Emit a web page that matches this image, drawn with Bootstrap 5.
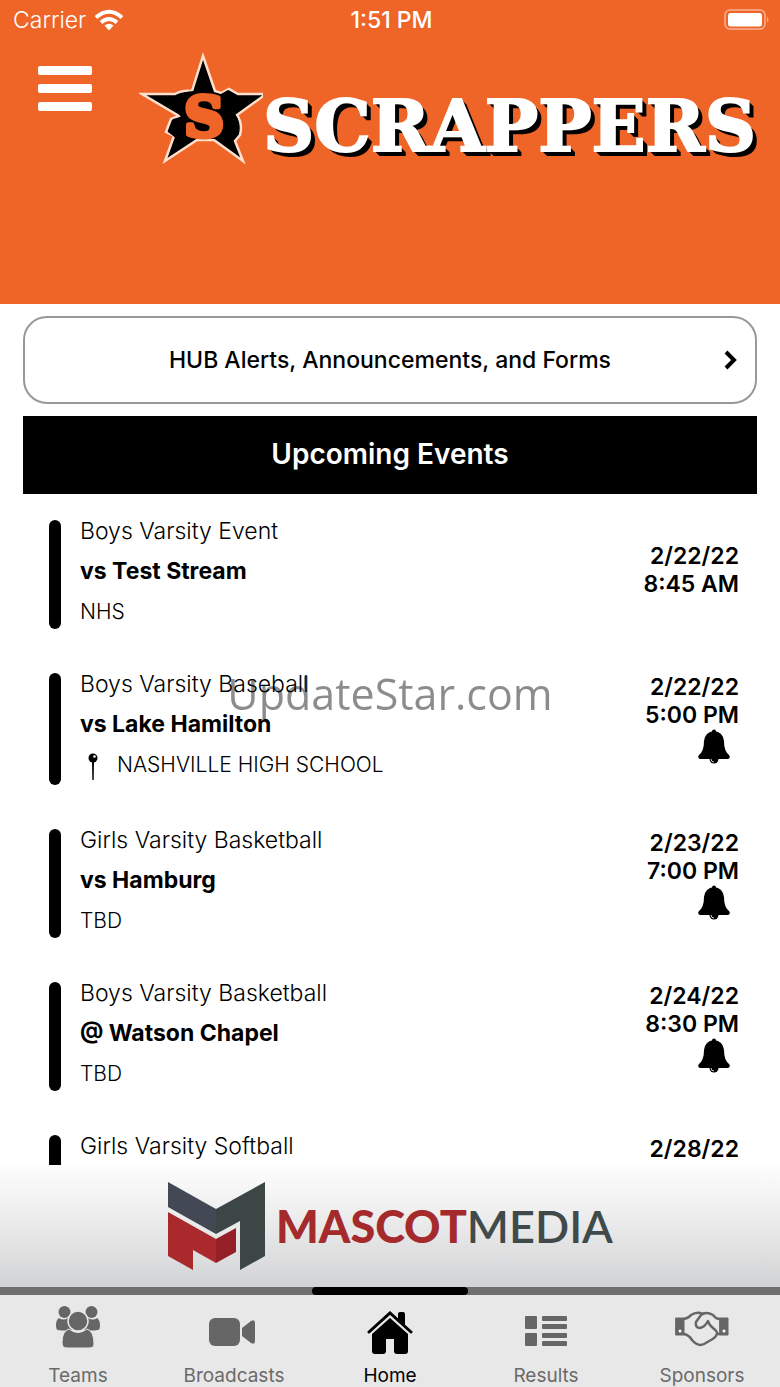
<!DOCTYPE html>
<html lang="en">
<head>
<meta charset="utf-8">
<meta name="viewport" content="width=device-width, initial-scale=1">
<title>Scrappers</title>
<link href="https://cdn.jsdelivr.net/npm/bootstrap@5.3.0/dist/css/bootstrap.min.css" rel="stylesheet">
<script src="https://cdn.jsdelivr.net/npm/bootstrap@5.3.0/dist/js/bootstrap.bundle.min.js"></script>
<style>
  body { font-family: Inter, "Liberation Sans", sans-serif; color: #000; background: #fff; }
  svg { display: block; flex: none; }
  .app-header { background: #ef6427; min-height: 304px; }
  .status-bar { height: 40px; padding: 0 10px 0 13px; font-size: 23px; line-height: 40px; }
  .carrier { font-weight: 300; }
  .clock { font-weight: 500; }
  .brand-row { padding: 12px 24px 0 38px; }
  .menu-btn { margin-top: 14px; }
  .wordmark { font: bold 71px/80px "DejaVu Serif", serif; color: #fff; margin-top: 34px;
    -webkit-text-stroke: 2px #fff;
    text-shadow: 1px 1px #000, 2px 2px #000, 3px 3px #000, 4px 4px #000, 5px 5px #000; }
  .page-body { padding: 0 23px; min-height: 0; }
  .alerts-btn { height: 88px; border: 2px solid #98989a; border-radius: 24px; font-size: 23px; font-weight: 500; padding: 0 18px; margin-top: 12px; color: #000; }
  .alerts-label { padding-left: 13px; }
  .section-title { height: 78px; margin: 12px 0 0; font-size: 28px; font-weight: 600; background: #000; }
  .event-list { padding: 26px 18px 0 26px; gap: 44px; }
  .event-item { min-height: 109px; gap: 19px; }
  .event-mark { width: 12px; border-radius: 6px; background: #000; }
  .event-text { gap: 17px; padding-bottom: 5px; line-height: 23px; font-size: 23px; }
  .event-team, .event-place { font-weight: 300; }
  .event-name { font-weight: 700; font-size: 23px; line-height: 23px; margin: 0; }
  .event-place { font-size: 21px; }
  .event-place.pinned { gap: 18px; padding-left: 7px; height: 27px; }
  .event-when { font-size: 23px; line-height: 28px; font-weight: 600; }
  .event-when .pad { height: 9px; }
  .bell-btn { height: 53px; margin-right: 9px; }
  .sponsor { height: 122px; gap: 10px; background: linear-gradient(#fdfdfd, #f0f0f1 35%, #d2d3d4); }
  .sponsor-name { font: 900 45px/52px Lato, sans-serif; color: #a52a2c; }
  .sponsor-name span { font-weight: 600; color: #414a4b; }
  .tab-track { height: 8px; background: #6f706f; }
  .tab-thumb { width: 20%; border-radius: 4px; background: #000; }
  .tab-bar { height: 92px; background: #e8e8e8; }
  .tab-bar a { color: #6a6a6a; font-size: 19px; line-height: 26px; }
  .tab-bar a.active { color: #000; }
  .tab-icon { height: 68px; }
  .overlay-mark { font: 43px/60px "Open Sans", "Noto Sans", sans-serif; color: rgba(0,0,0,.45); pointer-events: none; }
</style>
</head>
<body class="vh-100 d-flex flex-column overflow-hidden">
<header class="app-header flex-shrink-0 text-white">
  <div class="status-bar d-flex align-items-center">
    <div class="carrier col d-flex align-items-center gap-2">
      <span>Carrier</span>
      <svg width="30" height="22" viewBox="0 0 30 22" fill="none" stroke="#fff" stroke-width="4"><path d="M2 8.500Q15-3 28 8.500M7 13.500Q15 6.500 23 13.500"/><path d="M10.500 16.500Q15 13 19.500 16.500L15 21.500Z" fill="#fff" stroke="none"/></svg>
    </div>
    <div class="clock col-auto">1:51 PM</div>
    <div class="col d-flex justify-content-end">
      <svg width="46" height="22" viewBox="0 0 46 22"><rect x="1" y="1" width="40" height="19" rx="5" fill="none" stroke="#f8b193" stroke-width="1.500"/><rect x="4" y="4" width="34" height="13.500" rx="2.500" fill="#fff"/><path d="M43 7.500q3 3 0 6Z" fill="#f8b193"/></svg>
    </div>
  </div>
  <div class="brand-row d-flex justify-content-between align-items-start">
    <button class="menu-btn btn p-0 border-0" type="button" aria-label="Menu">
      <svg width="54" height="45" viewBox="0 0 54 45" fill="#fff"><rect width="54" height="9" rx="2"/><rect y="18" width="54" height="9" rx="2"/><rect y="36" width="54" height="9" rx="2"/></svg>
    </button>
    <div class="d-flex align-items-start">
      <svg width="124" height="114" viewBox="2 0 124 114" role="img" aria-label="Star emblem">
        <path d="M66 4L78 39L84 41L92 37L101 42L129 42L100 63Q106 72 103 83L98 89L106 109L77 88H60L28 109L37 84L29 80L34 67L42 64L5 42L38 42Q45 38 55 39Z" fill="#000" stroke="#ffe0cf" stroke-width="2.500"/>
        <path d="M40 46Q46 38 60 39L84 42L91 38L99 44L94 58Q104 66 101 77Q97 86 78 87H40L31 80L36 67L44 65Q35 56 40 46Z" fill="#000"/>
        <text x="67" y="84" text-anchor="middle" font-family="DejaVu Serif" font-weight="bold" font-size="55" fill="#ef6427" stroke="#ef6427" stroke-width="5" stroke-linejoin="round">S</text>
      </svg>
      <div class="wordmark">SCRAPPERS</div>
    </div>
  </div>
</header>

<main class="page-body flex-fill overflow-hidden">
  <button type="button" class="alerts-btn btn w-100 d-flex align-items-center">
    <span class="alerts-label flex-fill text-center">HUB Alerts, Announcements, and Forms</span>
    <svg width="13" height="20" viewBox="0 0 13 20" fill="none" stroke="#000" stroke-width="4"><path d="M2 2L10 10L2 18"/></svg>
  </button>
  <h1 class="section-title text-white d-flex align-items-center justify-content-center">Upcoming Events</h1>
  <div class="event-list d-flex flex-column">
    <article class="event-item d-flex">
      <div class="event-mark"></div>
      <div class="event-text flex-fill d-flex flex-column"><div class="event-team">Boys Varsity Event</div><h2 class="event-name">vs Test Stream</h2><div class="event-place">NHS</div></div>
      <div class="event-when align-self-center text-end"><div>2/22/22</div><div>8:45 AM</div><div class="pad"></div></div>
    </article>
    <article class="event-item d-flex">
      <div class="event-mark"></div>
      <div class="event-text flex-fill d-flex flex-column"><div class="event-team">Boys Varsity Baseball</div><h2 class="event-name">vs Lake Hamilton</h2>
        <div class="event-place pinned d-flex"><svg width="12" height="28" viewBox="0 0 12 28"><path d="M5 8h2l-.3 19H5.300Z"/><circle cx="6" cy="5" r="4.500"/><circle cx="7.500" cy="3.500" r="1.300" fill="#fff"/></svg><span>NASHVILLE HIGH SCHOOL</span></div></div>
      <div class="event-when text-end"><div>2/22/22</div><div>5:00 PM</div><button type="button" class="bell-btn btn p-0 border-0 d-flex ms-auto" aria-label="Notify me"><svg width="32" height="35" viewBox="0 0 32 35"><use href="#bell"/></svg></button></div>
    </article>
    <article class="event-item d-flex">
      <div class="event-mark"></div>
      <div class="event-text flex-fill d-flex flex-column"><div class="event-team">Girls Varsity Basketball</div><h2 class="event-name">vs Hamburg</h2><div class="event-place">TBD</div></div>
      <div class="event-when text-end"><div>2/23/22</div><div>7:00 PM</div><button type="button" class="bell-btn btn p-0 border-0 d-flex ms-auto" aria-label="Notify me"><svg width="32" height="35" viewBox="0 0 32 35"><use href="#bell"/></svg></button></div>
    </article>
    <article class="event-item d-flex">
      <div class="event-mark"></div>
      <div class="event-text flex-fill d-flex flex-column"><div class="event-team">Boys Varsity Basketball</div><h2 class="event-name">@ Watson Chapel</h2><div class="event-place">TBD</div></div>
      <div class="event-when text-end"><div>2/24/22</div><div>8:30 PM</div><button type="button" class="bell-btn btn p-0 border-0 d-flex ms-auto" aria-label="Notify me"><svg width="32" height="35" viewBox="0 0 32 35"><use href="#bell"/></svg></button></div>
    </article>
    <article class="event-item d-flex">
      <div class="event-mark"></div>
      <div class="event-text flex-fill d-flex flex-column"><div class="event-team">Girls Varsity Softball</div></div>
      <div class="event-when text-end"><div>2/28/22</div></div>
    </article>
  </div>
</main>

<footer class="flex-shrink-0">
  <div class="sponsor d-flex align-items-center justify-content-center">
    <svg width="99" height="90" viewBox="0 0 99 90"><path d="M1 1L49 28V53L1 26Z" fill="#424955"/><path d="M49 28L98 1V75L73 89V40L49 53Z" fill="#3c4645"/><path d="M1 31L49 58V82L26 69V89L1 75Z" fill="#a9292c"/><path d="M49 58L69 47V71L49 82Z" fill="#941f26"/></svg>
    <div class="sponsor-name">MASCOT<span>MEDIA</span></div>
  </div>
  <div class="tab-track d-flex justify-content-center"><div class="tab-thumb"></div></div>
  <nav class="tab-bar d-flex text-center" aria-label="Main">
    <a class="col text-decoration-none" href="#teams"><div class="tab-icon d-flex align-items-center justify-content-center">
      <svg width="46" height="48" viewBox="0 0 46 48" fill="#666"><circle cx="9.500" cy="7" r="6"/><circle cx="36.500" cy="7" r="6"/><path d="M4 13Q8 16 13 13Q13 22 18 25Q10 26 3 25Q1 25 1 20Q1 15 4 13ZM42 13Q38 16 33 13Q33 22 28 25Q36 26 43 25Q45 25 45 20Q45 15 42 13Z"/><path d="M14 24Q23 31 32 24Q39 26 39 39Q39 43 34 43H12Q7 43 7 38Q7 26 14 24Z" stroke="#e8e8e8"/><circle cx="23" cy="16" r="10" stroke="#e8e8e8" stroke-width="1.500"/></svg>
    </div>Teams</a>
    <a class="col text-decoration-none" href="#broadcasts"><div class="tab-icon d-flex align-items-center justify-content-center pt-2">
      <svg width="50" height="30" viewBox="0 0 50 30" fill="#666"><rect width="31" height="28" rx="6"/><path d="M33 10L42 3Q46 1 46 5V23Q46 27 42 25L33 18Z"/></svg>
    </div>Broadcasts</a>
    <a class="col text-decoration-none active" aria-current="page" href="#home"><div class="tab-icon d-flex align-items-center justify-content-center pt-2">
      <svg width="46" height="44" viewBox="0 0 46 44"><path d="M31 3Q31 1 33 1H36Q38 1 38 3V16L31 9Z"/><path d="M2 21L23 2L44 21" fill="none" stroke="#000" stroke-width="3" stroke-linecap="round"/><path d="M23 7L41 23V40Q41 43 38 43H30Q27 43 27 40V28H19V40Q19 43 16 43H8Q5 43 5 40V23Z"/></svg>
    </div>Home</a>
    <a class="col text-decoration-none" href="#results"><div class="tab-icon d-flex align-items-center justify-content-center pt-2">
      <svg width="42" height="34" viewBox="0 0 42 34" fill="#666"><rect width="12" height="13" rx="1"/><rect y="17" width="12" height="13" rx="1"/><rect x="17" width="25" height="5" rx="1"/><rect x="17" y="8" width="25" height="5" rx="1"/><rect x="17" y="17" width="25" height="5" rx="1"/><rect x="17" y="25" width="25" height="5" rx="1"/></svg>
    </div>Results</a>
    <a class="col text-decoration-none" href="#sponsors"><div class="tab-icon d-flex align-items-center justify-content-center">
      <svg width="54" height="36" viewBox="0 0 54 36" fill="none" stroke="#666" stroke-width="2.500" stroke-linejoin="round" stroke-linecap="round"><path d="M9 8Q14 7 16 4Q22 0 28 3M9 23Q14 24 17 29Q23 36 29 33L36 29Q42 26 42 22M45 8Q41 8 38 4Q31 0 26 4L21 11Q20 17 25 17Q30 16 33 10Q34 14 38 17Q43 21 42 23H45"/><path d="M1 7H9V24H1ZM45 7H53V24H45Z" fill="#666" stroke-width="1"/><circle cx="5" cy="20" r="1.500" fill="#fff" stroke="none"/><circle cx="49" cy="20" r="1.500" fill="#fff" stroke="none"/></svg>
    </div>Sponsors</a>
  </nav>
</footer>
<div class="overlay-mark position-fixed top-50 start-50 translate-middle">UpdateStar.com</div>
<svg width="0" height="0" class="position-absolute" aria-hidden="true"><defs><g id="bell"><circle cx="16" cy="2.500" r="2"/><path d="M16 2Q25 3 26 12Q26 22 31 26Q33 29 30 30H2Q-1 29 1 26Q6 22 6 12Q7 3 16 2Z"/><circle cx="16" cy="30" r="4.500"/><path d="M13 30Q13 33 16 33" fill="none" stroke="#fff" stroke-width=".8"/></g></defs></svg>
</body>
</html>
